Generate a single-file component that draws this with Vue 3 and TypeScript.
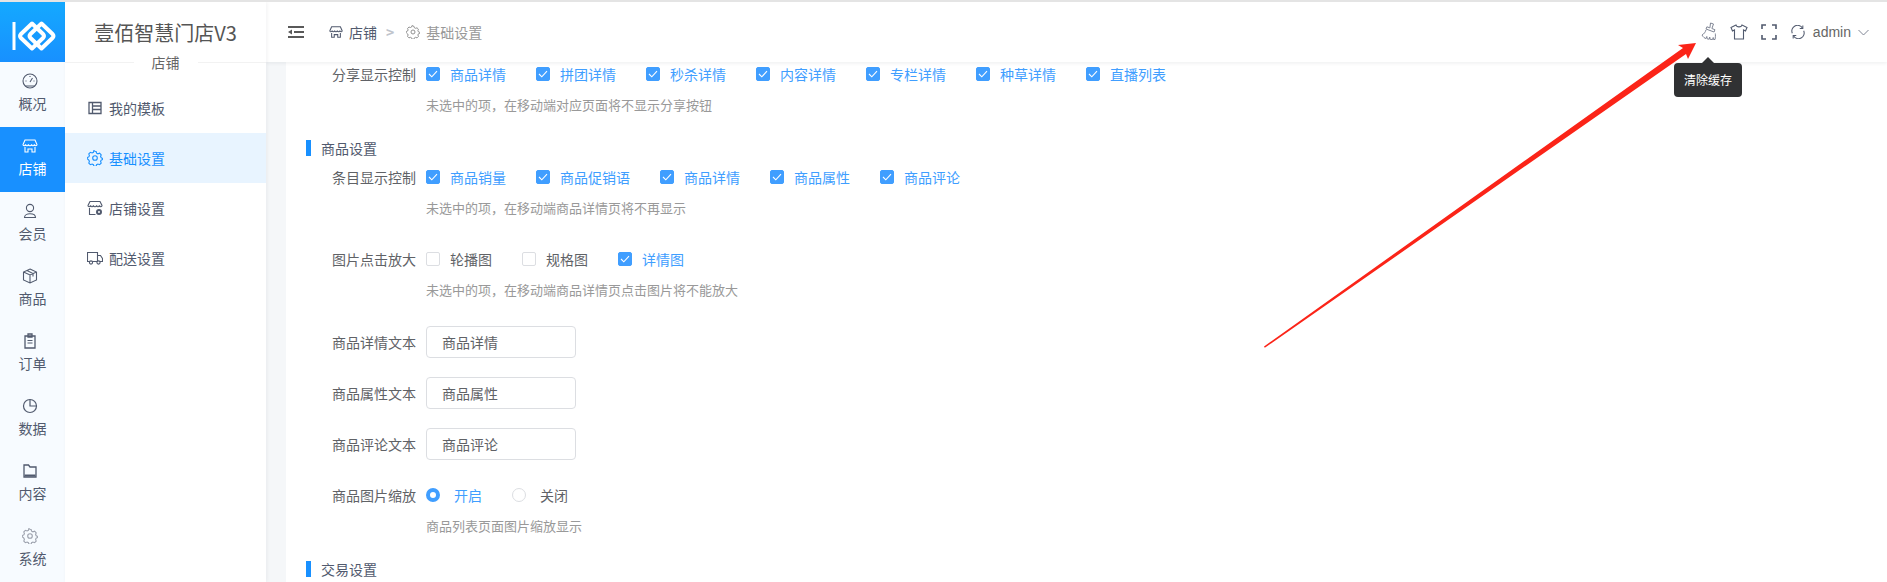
<script setup lang="ts">
interface NavItem {
  name: string;
  icon: string;
  active?: boolean;
}

const navItems: NavItem[] = [
  { name: "概况", icon: "gauge" },
  { name: "店铺", icon: "shop", active: true },
  { name: "会员", icon: "user" },
  { name: "商品", icon: "box" },
  { name: "订单", icon: "clip" },
  { name: "数据", icon: "pie" },
  { name: "内容", icon: "folder" },
  { name: "系统", icon: "gear" },
];

const subItems = [
  { name: "我的模板", icon: "table" },
  { name: "基础设置", icon: "gear", active: true },
  { name: "店铺设置", icon: "shopgear" },
  { name: "配送设置", icon: "truck" },
];

const shareOptions = ["商品详情", "拼团详情", "秒杀详情", "内容详情", "专栏详情", "种草详情", "直播列表"];
const itemOptions = ["商品销量", "商品促销语", "商品详情", "商品属性", "商品评论"];
const zoomOptions = [
  { name: "轮播图", on: false },
  { name: "规格图", on: false },
  { name: "详情图", on: true },
];
const textFields = [
  { label: "商品详情文本", value: "商品详情" },
  { label: "商品属性文本", value: "商品属性" },
  { label: "商品评论文本", value: "商品评论" },
];

const gearPath =
  "M8 1.2l1.1.3.5 1.7 1.3.6 1.7-.6 1.6 1.6-.6 1.7.6 1.3 1.6.6v1.1l-1.6.6-.6 1.3.6 1.7-1.6 1.6-1.7-.6-1.3.6-.5 1.6H7l-.6-1.6-1.3-.6-1.7.6-1.6-1.6.6-1.7-.6-1.3L.2 8.6V7.5l1.6-.6.6-1.3-.6-1.7 1.6-1.6 1.7.6 1.3-.6.5-1.7z";
</script>

<template>
  <div class="page">
    <aside class="nav">
      <div class="logo">
        <svg width="65" height="60" viewBox="0 0 65 60" fill="none">
          <rect x="12.5" y="20" width="3" height="28" fill="#fff" />
          <path d="M32 21.5L43 32Q45 34 43 36L32 46.500 21 36Q19 34 21 32z" stroke="#fff" stroke-width="4" stroke-linejoin="round" />
          <path d="M41.500 21.500L52.500 32Q54.500 34 52.500 36L41.500 46.500 30.500 36Q28.500 34 30.500 32z" stroke="#fff" stroke-width="4" stroke-linejoin="round" />
        </svg>
      </div>
      <div v-for="item in navItems" :key="item.name" class="nav-item" :class="{ active: item.active }">
        <svg class="nav-icon" width="16" height="16" viewBox="0 0 16 16" fill="none" stroke="currentColor" stroke-width="1.1">
          <template v-if="item.icon === 'gauge'">
            <circle cx="8" cy="8" r="7" />
            <path d="M3 13h10M8 9l2.500-4M3.500 8h1M11.500 8h1M8 3v1" />
          </template>
          <template v-else-if="item.icon === 'shop'">
            <path d="M3 2h10l2 4.500c0 1.500-2.200 1.700-2.600 0-.4 1.700-2.400 1.700-2.800 0-.4 1.700-2.800 1.700-3.200 0-.4 1.700-2.400 1.700-2.800 0C3.200 8.200 1 8 1 6.500z" />
            <path d="M3 9v5h3v-3h4v3h3V9" />
          </template>
          <template v-else-if="item.icon === 'user'">
            <circle cx="8" cy="5" r="3.600" />
            <path d="M2.500 14.500c0-5 11-5 11 0z" />
          </template>
          <template v-else-if="item.icon === 'box'">
            <path d="M8 1l6.500 3v8L8 15l-6.500-3V4zM1.500 4L8 7l6.500-3M8 7v8M5 2.500l6 3v3" />
          </template>
          <template v-else-if="item.icon === 'clip'">
            <path d="M3 3h10v12H3zM6 1h4v3H6z" stroke-width="1.300" />
            <path d="M5.500 7.500h5M5.500 10h5" />
          </template>
          <template v-else-if="item.icon === 'pie'">
            <circle cx="8" cy="8" r="6.500" stroke-width="1.200" />
            <path d="M8 1.500V8h6.500" stroke-width="1.200" />
          </template>
          <template v-else-if="item.icon === 'folder'">
            <path d="M2 2h4.500l1.500 2h6v10H2z" stroke-width="1.300" />
            <path d="M2.500 11.500h11v2h-11z" fill="currentColor" stroke="none" />
          </template>
          <template v-else>
            <path :d="gearPath" class="gear-soft" />
            <circle cx="8" cy="8" r="2.300" class="gear-soft" />
          </template>
        </svg>
        <span>{{ item.name }}</span>
      </div>
    </aside>

    <aside class="sub">
      <div class="sub-brand">壹佰智慧门店V3</div>
      <div class="sub-title"><span>店铺</span></div>
      <ul class="sub-menu">
        <li v-for="item in subItems" :key="item.name" class="sub-item" :class="{ active: item.active }">
          <svg width="16" height="16" viewBox="0 0 16 16" fill="none" stroke="currentColor" stroke-width="1.100">
            <template v-if="item.icon === 'table'">
              <path d="M2 2.500h12v11H2zM5.500 2.500v11M5.500 6h8.500M5.500 9.500h8.500" stroke-width="1.300" />
            </template>
            <template v-else-if="item.icon === 'gear'">
              <path :d="gearPath" />
              <circle cx="8" cy="8" r="2.300" />
            </template>
            <template v-else-if="item.icon === 'shopgear'">
              <path d="M3 1.500h10l2 4c0 1.500-2.200 1.700-2.600 0-.4 1.700-2.400 1.700-2.800 0-.4 1.700-2.800 1.700-3.200 0-.4 1.700-2.400 1.700-2.800 0C3.200 7.200 1 7 1 5.500z" />
              <path d="M2.500 8v6.500h6" />
              <circle cx="12" cy="12" r="2" stroke-width="2" />
            </template>
            <template v-else>
              <path d="M.5 2.500h10v9H.5zM10.500 5.500h3l2 3v3h-5" />
              <circle cx="4" cy="12.500" r="1.600" fill="#fff" />
              <circle cx="11.500" cy="12.500" r="1.600" fill="#fff" />
            </template>
          </svg>
          <span>{{ item.name }}</span>
        </li>
      </ul>
    </aside>

    <main class="main">
      <header class="top">
        <svg class="toggle" width="16" height="12" viewBox="0 0 16 12">
          <path d="M0 0h16v2H0zM6 5h10v2H6zM0 10h16v2H0zM0 6l4-2.500v5z" fill="#595959" />
        </svg>
        <nav class="crumbs">
          <svg width="14" height="14" viewBox="0 0 16 16" fill="none" stroke="#515a6e" stroke-width="1.200">
            <path d="M3 2h10l2 4.500c0 1.500-2.200 1.700-2.600 0-.4 1.700-2.400 1.700-2.800 0-.4 1.700-2.800 1.700-3.200 0-.4 1.700-2.400 1.700-2.800 0C3.200 8.200 1 8 1 6.500z" />
            <path d="M3 9v5h3v-3h4v3h3V9" />
          </svg>
          <span class="crumb-now">店铺</span>
          <span class="crumb-sep">&gt;</span>
          <svg width="14" height="14" viewBox="0 0 16 16" fill="none" stroke="#8c8c8c" stroke-width="1.100">
            <path :d="gearPath" />
            <circle cx="8" cy="8" r="2.300" />
          </svg>
          <span class="crumb-last">基础设置</span>
        </nav>
        <div class="tools">
          <svg class="tool-brush" width="16" height="18" viewBox="0 0 16 18" fill="none" stroke="#808695" stroke-width="1">
            <path d="M9.500 1l3 1-1.600 4.500 3 1.200-.8 2.300-8.100-3 .9-2.200 3 1.100z" />
            <path d="M5 7.800C4.500 10 3 12 1 13c1 2 3 3.500 4 3.500l.8-2 .4 2.400 2 .3.5-2.200.5 2.400 2.400.1.600-2 .3 2 1.500 0c.5-2 .5-4.500.3-6" />
          </svg>
          <svg class="tool-tee" width="18" height="16" viewBox="0 0 18 16" fill="none" stroke="#515a6e" stroke-width="1.100">
            <path d="M6 1L1 3.500l1.500 3.500L4.500 6v9h9V6l2 1L17 3.500 12 1c-.5 2.500-5.500 2.500-6 0z" />
          </svg>
          <svg class="tool-full" width="16" height="16" viewBox="0 0 16 16" fill="none" stroke="#515a6e" stroke-width="1.600">
            <path d="M1 5V1h4M11 1h4v4M15 11v4h-4M5 15H1v-4" />
          </svg>
          <svg class="tool-sync" width="14" height="14" viewBox="0 0 16 16" fill="none" stroke="#515a6e" stroke-width="1.200">
            <path d="M1.500 9.500A6.500 6.500 0 0 1 13 3.500M14.500 6.500A6.500 6.500 0 0 1 3 12.500" />
            <path d="M13.500 .5v3.500H10M2.500 15.500V12H6" />
          </svg>
          <span class="admin">admin</span>
          <svg width="11" height="7" viewBox="0 0 11 7" fill="none" stroke="#808695" stroke-width="1">
            <path d="M.5 1L5.500 6l5-5" />
          </svg>
        </div>
      </header>

      <section class="content">
        <div class="form-row">
          <label class="form-label">分享显示控制</label>
          <div class="options">
            <span v-for="opt in shareOptions" :key="opt" class="check on">
              <i class="box"><svg width="10" height="8" viewBox="0 0 10 8" fill="none" stroke="#fff" stroke-width="1.100"><path d="M1 4l2.800 2.800L9 1.200" /></svg></i>
              {{ opt }}
            </span>
          </div>
        </div>
        <p class="hint">未选中的项，在移动端对应页面将不显示分享按钮</p>

        <h3 class="section">商品设置</h3>
        <div class="form-row">
          <label class="form-label">条目显示控制</label>
          <div class="options">
            <span v-for="opt in itemOptions" :key="opt" class="check on">
              <i class="box"><svg width="10" height="8" viewBox="0 0 10 8" fill="none" stroke="#fff" stroke-width="1.100"><path d="M1 4l2.800 2.800L9 1.200" /></svg></i>
              {{ opt }}
            </span>
          </div>
        </div>
        <p class="hint">未选中的项，在移动端商品详情页将不再显示</p>

        <div class="form-row spaced">
          <label class="form-label">图片点击放大</label>
          <div class="options">
            <span v-for="opt in zoomOptions" :key="opt.name" class="check" :class="{ on: opt.on }">
              <i class="box"><svg v-if="opt.on" width="10" height="8" viewBox="0 0 10 8" fill="none" stroke="#fff" stroke-width="1.100"><path d="M1 4l2.800 2.800L9 1.200" /></svg></i>
              {{ opt.name }}
            </span>
          </div>
        </div>
        <p class="hint">未选中的项，在移动端商品详情页点击图片将不能放大</p>

        <div v-for="field in textFields" :key="field.label" class="form-row field">
          <label class="form-label">{{ field.label }}</label>
          <input class="text-input" :value="field.value" readonly />
        </div>

        <div class="form-row field">
          <label class="form-label">商品图片缩放</label>
          <div class="options">
            <span class="radio on"><i class="dot"></i>开启</span>
            <span class="radio"><i class="dot"></i>关闭</span>
          </div>
        </div>
        <p class="hint">商品列表页面图片缩放显示</p>

        <h3 class="section">交易设置</h3>
      </section>
    </main>

    <div class="tooltip">清除缓存</div>

    <svg class="arrow" width="1887" height="582" viewBox="0 0 1887 582">
      <path d="M1264 346.500L1683 48 1678 45 1696 43 1688 59 1686 54 1264.800 347.800z" fill="#fb2418" />
    </svg>
  </div>
</template>

<style>
html,
body {
  margin: 0;
  background: #fff;
}
</style>

<style scoped>
.page {
  position: relative;
  display: flex;
  width: 1887px;
  height: 582px;
  overflow: hidden;
  box-sizing: border-box;
  border-top: 2px solid #e4e4e4;
  font-family: "Noto Sans CJK SC", "Liberation Sans", sans-serif;
  font-size: 14px;
  color: #515a6e;
}

.nav {
  flex: none;
  width: 65px;
  background: #f7fbff;
}

.logo {
  height: 60px;
  background: linear-gradient(180deg, #14a9ff, #1890ff);
}

.logo svg {
  display: block;
}

.nav-item {
  display: flex;
  flex-direction: column;
  align-items: center;
  height: 65px;
  box-sizing: border-box;
  padding-top: 11px;
  line-height: 20px;
}

.nav-icon {
  margin: 0 5px 4px 0;
}

.gear-soft {
  stroke: #9ca1ad;
}

.nav-item.active {
  background: #1890ff;
  color: #fff;
}

.sub {
  flex: none;
  position: relative;
  z-index: 2;
  width: 201px;
  background: #fff;
  box-shadow: 1px 0 4px rgba(0, 21, 41, 0.06);
}

.sub-brand {
  height: 60px;
  line-height: 62px;
  text-align: center;
  font-size: 20px;
  color: #555;
}

.sub-title {
  height: 1px;
  background: #f2f2f2;
  text-align: center;
  line-height: 1px;
}

.sub-title span {
  display: inline-block;
  padding: 0 18px;
  background: #fff;
  color: #666;
}

.sub-menu {
  list-style: none;
  margin: 0;
  padding: 20px 0 0;
}

.sub-item {
  display: flex;
  align-items: center;
  gap: 6px;
  height: 50px;
  padding-left: 22px;
  color: #515a6e;
}

.sub-item.active {
  background: #e8f4ff;
  color: #1890ff;
}

.main {
  flex: 1;
  min-width: 0;
  background: #f5f7f9;
  position: relative;
}

.top {
  position: relative;
  z-index: 1;
  display: flex;
  align-items: center;
  height: 60px;
  padding: 0 18px 0 22px;
  background: #fff;
  box-shadow: 0 1px 4px rgba(0, 21, 41, 0.08);
}

.toggle {
  margin-right: 25px;
}

.crumbs {
  display: flex;
  align-items: center;
}

.crumb-now {
  margin-left: 6px;
  color: #515a6e;
}

.crumb-sep {
  margin: 0 12px 0 9px;
  color: #c0c4cc;
  font-weight: 700;
}

.crumb-last {
  margin-left: 6px;
  color: #999;
}

.tools {
  display: flex;
  align-items: center;
  margin-left: auto;
}

.tool-brush {
  margin-top: -3px;
}

.tool-tee {
  margin-left: 13px;
}

.tool-full {
  margin-left: 13px;
}

.tool-sync {
  margin-left: 14px;
}

.admin {
  margin: 0 7px 0 8px;
  font-family: "Liberation Sans", sans-serif;
  color: #666;
}

.content {
  margin-left: 20px;
  height: 522px;
  box-sizing: border-box;
  padding-top: 0;
  overflow: hidden;
  background: #fff;
}

.form-row {
  display: flex;
  align-items: center;
  height: 32px;
}

.content > .form-row:first-child {
  margin-top: -4px;
}

.form-row.spaced {
  margin-top: 25px;
}

.form-row.field {
  margin-top: 19px;
}

.hint + .form-row.field {
  margin-top: 26px;
}

.form-label {
  flex: none;
  width: 130px;
  padding-right: 10px;
  text-align: right;
  color: #606266;
}

.options {
  display: flex;
  align-items: center;
}

.check,
.radio {
  display: flex;
  align-items: center;
  margin-right: 30px;
  color: #606266;
}

.check.on,
.radio.on {
  color: #409eff;
}

.box {
  display: flex;
  align-items: center;
  justify-content: center;
  width: 14px;
  height: 14px;
  box-sizing: border-box;
  margin-right: 10px;
  border: 1px solid #dcdee2;
  border-radius: 2px;
  background: #fff;
}

.check.on .box {
  border-color: #409eff;
  background: #409eff;
}

.dot {
  width: 14px;
  height: 14px;
  box-sizing: border-box;
  margin-right: 14px;
  border: 1px solid #dcdee2;
  border-radius: 50%;
  background: #fff;
}

.radio.on .dot {
  border: 4.5px solid #409eff;
}

.hint {
  margin: 5px 0 0 140px;
  line-height: 20px;
  font-size: 13px;
  color: #999;
}

.section {
  display: flex;
  align-items: center;
  height: 20px;
  margin: 23px 0 3px 20px;
  font-size: 14px;
  font-weight: 400;
  color: #515a6e;
}

.section::before {
  content: "";
  width: 5px;
  height: 16px;
  margin-right: 10px;
  background: #1890ff;
}

.text-input {
  width: 150px;
  height: 32px;
  box-sizing: border-box;
  padding: 0 15px;
  border: 1px solid #dcdee2;
  border-radius: 4px;
  outline: none;
  font: inherit;
  color: #606266;
}

.tooltip {
  position: absolute;
  z-index: 3;
  left: 1674px;
  top: 61px;
  width: 68px;
  height: 34px;
  border-radius: 4px;
  background: #303133;
  color: #fff;
  font-size: 12px;
  line-height: 34px;
  text-align: center;
}

.tooltip::before {
  content: "";
  position: absolute;
  left: 28px;
  top: -6px;
  border: 6px solid transparent;
  border-top: 0;
  border-bottom-color: #303133;
}

.arrow {
  position: absolute;
  z-index: 4;
  left: 0;
  top: -2px;
  pointer-events: none;
}
</style>
